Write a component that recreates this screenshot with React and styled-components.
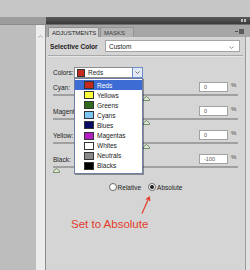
import React from 'react';
import styled, { createGlobalStyle } from 'styled-components';

const GlobalStyle = createGlobalStyle`
  html, body {
    margin: 0;
    padding: 0;
  }
  body {
    font-family: "Liberation Sans", Arial, sans-serif;
    background: #c6c6c6;
  }
`;

const Screen = styled.div`
  position: relative;
  width: 250px;
  height: 270px;
  overflow: hidden;
  background: #c6c6c6;
  display: flex;
  flex-direction: column;
`;

const TopGap = styled.div`
  height: 17px;
  flex: none;
`;

const Body = styled.div`
  flex: 1;
  display: flex;
  min-height: 0;
`;

const Dock = styled.div`
  width: 46px;
  flex: none;
  display: flex;
  flex-direction: column;
`;

const DockBand = styled.div`
  height: 7px;
  background: #9c9c9c;
  border-bottom: 1px solid #8a8a8a;
`;

const DockBody = styled.div`
  flex: 1;
  display: flex;
`;

const DockFill = styled.div`
  width: 36px;
  background: #bdbdbd;
`;

const DockScroll = styled.div`
  width: 9px;
  background: #ececec;
  border-right: 1px solid #8c8c8c;
  display: flex;
  justify-content: center;
  padding-top: 10px;
`;

const Panel = styled.div`
  flex: 1;
  display: flex;
  flex-direction: column;
`;

const TitleBar = styled.div`
  height: 7px;
  background: linear-gradient(#5a5a5a, #3a3a3a);
  display: flex;
  justify-content: flex-end;
  align-items: center;
  padding-right: 4px;
`;

const TabBar = styled.div`
  height: 12px;
  background: #a6a6a6;
  border-top: 1px solid #6e6e6e;
  display: flex;
  align-items: flex-end;
  padding: 0 6px 0 2px;
`;

const Tab = styled.div`
  height: 10px;
  padding: 0 3px;
  display: flex;
  align-items: center;
  font-size: 6px;
  color: ${p => (p.$active ? '#1e1e1e' : '#3a3a3a')};
  background: ${p => (p.$active ? '#d5d5d5' : '#b3b3b3')};
  border: 1px solid ${p => (p.$active ? '#8e8e8e' : '#939393')};
  border-bottom: none;
  margin-right: 1px;
  width: ${p => p.$w}px;
  box-sizing: border-box;
`;

const TabMenu = styled.div`
  margin-left: auto;
  align-self: center;
  display: flex;
  align-items: center;
  gap: 1px;
`;

const ContentRow = styled.div`
  flex: 1;
  display: flex;
`;

const Content = styled.div`
  flex: 1;
  background: #d5d5d5;
  border-right: 1px solid #9a9a9a;
  padding: 3px 5px 0 4px;
  display: flex;
  flex-direction: column;
`;

const Gutter = styled.div`
  width: 4px;
  background: #e2e2e2;
`;

const HeaderRow = styled.div`
  height: 12px;
  display: flex;
  align-items: center;
`;

const Title = styled.div`
  font-size: 6.6px;
  font-weight: bold;
  color: #1a1a1a;
`;

const PresetSelect = styled.div`
  margin-left: auto;
  width: 135px;
  height: 12px;
  box-sizing: border-box;
  background: #fff;
  border: 1px solid #a4a4a4;
  display: flex;
  align-items: center;
  padding: 0 5px 0 3px;
  font-size: 6.5px;
  color: #222;
`;

const Chevron = styled.svg`
  margin-left: auto;
  flex: none;
`;

const Divider = styled.div`
  margin: 3px -3px 0 -2px;
  border-top: 1px solid #a8a8a8;
  border-bottom: 1px solid #e6e6e6;
`;

const Section = styled.div`
  padding: 10px 2px 0 3px;
  display: flex;
  flex-direction: column;
`;

const ColorsRow = styled.div`
  height: 11px;
  display: flex;
  align-items: center;
`;

const Label = styled.div`
  font-size: 6.5px;
  color: #222;
  width: ${p => (p.$w ? `${p.$w}px` : 'auto')};
  flex: ${p => (p.$w ? 'none' : '1')};
`;

const ColorSelect = styled.div`
  position: relative;
  width: 69px;
  height: 11px;
  box-sizing: border-box;
  background: #fff;
  border: 1px solid #8c8c8c;
  display: flex;
  align-items: center;
  padding-left: 2px;
  font-size: 6.5px;
  color: #222;
`;

const Swatch = styled.span`
  width: ${p => p.$w}px;
  height: 8px;
  box-sizing: border-box;
  flex: none;
  background: ${p => p.$c};
  border: 1px solid #333;
  margin-right: 3px;
`;

const ArrowButton = styled.div`
  margin-left: auto;
  width: 11px;
  height: 11px;
  margin-right: -1px;
  box-sizing: border-box;
  border: 1px solid #6d8ccb;
  background: #e2e9f6;
  display: flex;
  align-items: center;
  justify-content: center;
`;

const Menu = styled.div`
  position: absolute;
  top: 10px;
  left: -1px;
  width: 69px;
  box-sizing: border-box;
  background: #fff;
  border: 1px solid #6f7ea8;
  padding: 1px 0 2px;
  box-shadow: 1px 1px 0 rgba(0, 0, 0, 0.35);
  z-index: 2;
`;

const MenuItem = styled.div`
  height: 10.1px;
  display: flex;
  align-items: center;
  padding-left: 9px;
  font-size: 6.5px;
  color: ${p => (p.$hot ? '#fff' : '#222')};
  background: ${p => (p.$hot ? '#3d6cd4' : 'transparent')};
`;

const Adjust = styled.div`
  margin-top: ${p => (p.$first ? 4 : 10)}px;
`;

const AdjustRow = styled.div`
  height: 10px;
  display: flex;
  align-items: center;
`;

const NumInput = styled.div`
  width: 29px;
  height: 10px;
  box-sizing: border-box;
  background: #fff;
  border: 1px solid #a2a2a2;
  font-size: 5.5px;
  color: #555;
  display: flex;
  align-items: center;
  padding-left: 4px;
`;

const Pct = styled.div`
  width: 7px;
  margin-left: 3px;
  font-size: 6px;
  color: #444;
  align-self: flex-start;
`;

const Track = styled.div`
  position: relative;
  margin-top: 2px;
  height: 2px;
  background: #a0a0a0;
`;

const Thumb = styled.svg`
  position: absolute;
  top: 2px;
`;

const RadioRow = styled.div`
  margin-top: 15px;
  height: 8px;
  display: flex;
  justify-content: center;
  align-items: center;
  gap: 7px;
`;

const RadioOption = styled.div`
  display: flex;
  align-items: center;
  gap: 1px;
  font-size: 6.5px;
  color: #222;
`;

const RadioDot = styled.span`
  width: 8px;
  height: 8px;
  box-sizing: border-box;
  border-radius: 50%;
  border: 1px solid #6e6e6e;
  background: radial-gradient(circle, #fff 60%, #e6e6e6);
  display: flex;
  align-items: center;
  justify-content: center;
  &::after {
    content: '';
    width: 4px;
    height: 4px;
    border-radius: 50%;
    background: ${p => (p.$on ? '#1e1e1e' : 'transparent')};
  }
`;

const Note = styled.div`
  position: absolute;
  left: 71px;
  top: 219px;
  font-size: 11.5px;
  line-height: 1;
  color: #e23c2a;
`;

const NoteArrow = styled.svg`
  position: absolute;
  left: 138px;
  top: 194px;
`;

const channels = [
  { name: 'Reds', color: '#c62a1c' },
  { name: 'Yellows', color: '#ffff3c' },
  { name: 'Greens', color: '#2f6a1e' },
  { name: 'Cyans', color: '#7cc6f2' },
  { name: 'Blues', color: '#0a0a66' },
  { name: 'Magentas', color: '#b11fc4' },
  { name: 'Whites', color: '#ffffff' },
  { name: 'Neutrals', color: '#8a8a8a' },
  { name: 'Blacks', color: '#000000' },
];

const adjustments = [
  { label: 'Cyan:', value: 0 },
  { label: 'Magenta:', value: 0 },
  { label: 'Yellow:', value: 0 },
  { label: 'Black:', value: -100 },
];

const ChevronDown = ({ color = '#666' }) => (
  <svg width="5" height="3" viewBox="0 0 5 3">
    <path d="M0.5 0.5 L2.5 2.5 L4.5 0.5" fill="none" stroke={color} strokeWidth="0.9" />
  </svg>
);

const App = () => (
  <Screen>
    <GlobalStyle />
    <TopGap />
    <Body>
      <Dock>
        <DockBand />
        <DockBody>
          <DockFill />
          <DockScroll>
            <svg width="5" height="3" viewBox="0 0 5 3">
              <path d="M0.5 2.5 L2.5 0.5 L4.5 2.5" fill="none" stroke="#a0a0a0" strokeWidth="0.9" />
            </svg>
          </DockScroll>
        </DockBody>
      </Dock>
      <Panel>
        <TitleBar>
          <svg width="5" height="3" viewBox="0 0 5 3">
            <rect x="0" y="0" width="2" height="3" fill="#bdbdbd" />
            <rect x="3" y="0" width="2" height="3" fill="#bdbdbd" />
          </svg>
        </TitleBar>
        <TabBar>
          <Tab $active $w={51}>ADJUSTMENTS</Tab>
          <Tab $w={34}>MASKS</Tab>
          <TabMenu>
            <svg width="9" height="5" viewBox="0 0 9 5">
              <rect x="0" y="2" width="3" height="1" fill="#4a4a4a" />
              <rect x="4" y="0" width="5" height="5" fill="#5a5a5a" />
            </svg>
          </TabMenu>
        </TabBar>
        <ContentRow>
          <Content>
            <HeaderRow>
              <Title>Selective Color</Title>
              <PresetSelect>
                Custom
                <Chevron as="span">
                  <ChevronDown color="#888" />
                </Chevron>
              </PresetSelect>
            </HeaderRow>
            <Divider />
            <Section>
              <ColorsRow>
                <Label $w={21}>Colors:</Label>
                <ColorSelect>
                  <Swatch $w={8} $c="#c62a1c" />
                  Reds
                  <ArrowButton>
                    <ChevronDown />
                  </ArrowButton>
                  <Menu>
                    {channels.map((c, i) => (
                      <MenuItem key={c.name} $hot={i === 0}>
                        <Swatch $w={10} $c={c.color} />
                        {c.name}
                      </MenuItem>
                    ))}
                  </Menu>
                </ColorSelect>
              </ColorsRow>
              {adjustments.map((a, i) => {
                const pct = (a.value + 100) / 2;
                return (
                  <Adjust key={a.label} $first={i === 0}>
                    <AdjustRow>
                      <Label>{a.label}</Label>
                      <NumInput>{a.value}</NumInput>
                      <Pct>%</Pct>
                    </AdjustRow>
                    <Track>
                      <Thumb
                        width="7"
                        height="5"
                        viewBox="0 0 7 5"
                        style={{ left: `calc(${pct}% - ${(pct / 100) * 5}px)` }}
                      >
                        <polygon
                          points="3.5,0.5 6.5,3 6.5,4.5 0.5,4.5 0.5,3"
                          fill="#dbe8cf"
                          stroke="#5d7a55"
                          strokeWidth="0.8"
                        />
                      </Thumb>
                    </Track>
                  </Adjust>
                );
              })}
              <RadioRow>
                <RadioOption>
                  <RadioDot />
                  Relative
                </RadioOption>
                <RadioOption>
                  <RadioDot $on />
                  Absolute
                </RadioOption>
              </RadioRow>
            </Section>
          </Content>
          <Gutter />
        </ContentRow>
      </Panel>
    </Body>
    <Note>Set to Absolute</Note>
    <NoteArrow width="16" height="22" viewBox="0 0 16 22">
      <path d="M4 19.5 L11 3.5" fill="none" stroke="#e23c2a" strokeWidth="1.2" />
      <path d="M8 5.5 L11.3 3 L11.8 7" fill="none" stroke="#e23c2a" strokeWidth="1.2" />
    </NoteArrow>
  </Screen>
);

export default App;
